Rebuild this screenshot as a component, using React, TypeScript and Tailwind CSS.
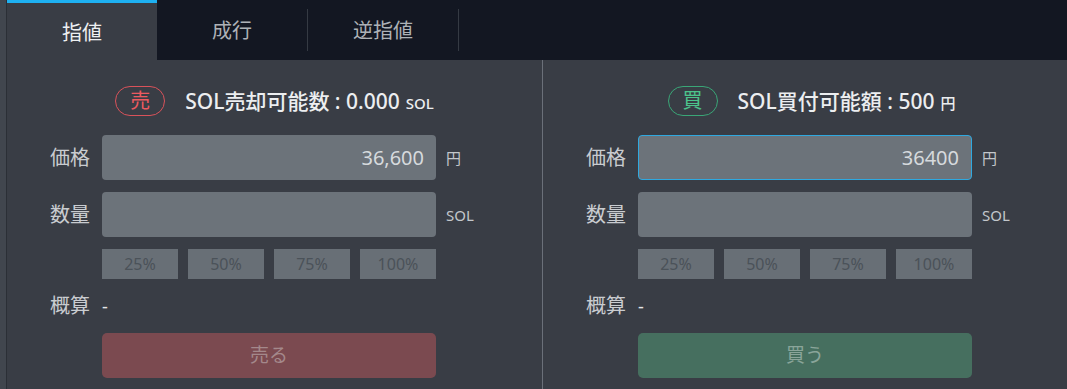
import React from "react";

const font = { fontFamily: '"Noto Sans", "Noto Sans CJK JP", sans-serif' };

type Side = "sell" | "buy";

function Badge({ side }: { side: Side }) {
  const sell = side === "sell";
  return (
    <div
      className={
        "flex h-[30px] w-[50px] items-center justify-center rounded-full border text-[20px] leading-none " +
        (sell ? "border-[#d9525a] text-[#ec5a60]" : "border-[#3aa677] text-[#4cc48c]")
      }
    >
      {sell ? "売" : "買"}
    </div>
  );
}

function Row({ label, children, unit }: { label: string; children: React.ReactNode; unit?: string }) {
  return (
    <div className="flex items-center">
      <div className="w-[52px] text-[20px] leading-none text-[#c9ccd0]">{label}</div>
      {children}
      {unit && <div className="ml-[10px] mt-[2px] text-[15px] leading-none text-[#c3c7cb]">{unit}</div>}
    </div>
  );
}

function OrderColumn({ side }: { side: Side }) {
  const sell = side === "sell";
  return (
    <div className="flex flex-col pl-[43px] pt-[26px]">
      <div className={"flex items-center justify-center gap-[20px] " + (sell ? "pr-[43px]" : "pr-[30px]")}>
        <Badge side={side} />
        <div className="flex items-baseline text-[21px] font-medium leading-none text-[#eceef0]">
          {sell ? "SOL売却可能数 : 0.000" : "SOL買付可能額 : 500"}
          <span className="ml-[6px] text-[15px]">{sell ? "SOL" : "円"}</span>
        </div>
      </div>

      <div className="mt-[19px]">
        <Row label="価格" unit="円">
          <div
            className={
              "flex h-[45px] w-[334px] items-center justify-end rounded-[4px] bg-[#6c737a] pr-[12px] text-[20px] text-[#d6dadd] " +
              (sell ? "" : "border border-[#2fa9e0]")
            }
          >
            {sell ? "36,600" : "36400"}
          </div>
        </Row>
      </div>

      <div className="mt-[12px]">
        <Row label="数量" unit="SOL">
          <div className="h-[45px] w-[334px] rounded-[4px] bg-[#6c737a]" />
        </Row>
      </div>

      <div className="mt-[12px] flex">
        <div className="w-[52px]" />
        <div className="grid w-[334px] grid-cols-4 gap-[10px]">
          {["25%", "50%", "75%", "100%"].map((p) => (
            <div
              key={p}
              className="flex h-[30px] items-center justify-center bg-[#686f76] text-[16px] text-[#4b5259]"
            >
              {p}
            </div>
          ))}
        </div>
      </div>

      <div className="flex h-[54px] items-center">
        <div className="w-[52px] text-[20px] leading-none text-[#c9ccd0]">概算</div>
        <div className="text-[18px] leading-none text-[#e4e6e8]">-</div>
      </div>

      <div className="flex">
        <div className="w-[52px]" />
        <div
          className={
            "flex h-[45px] w-[334px] items-center justify-center rounded-[5px] text-[19px] " +
            (sell ? "bg-[#7b4a50] text-[#a4888b]" : "bg-[#466f5f] text-[#8aa59a]")
          }
        >
          {sell ? "売る" : "買う"}
        </div>
      </div>
    </div>
  );
}

export default function App() {
  const tabs = ["指値", "成行", "逆指値"];
  return (
    <div className="flex h-[389px] w-[1067px] overflow-hidden bg-[#393d45]" style={font}>
      <div className="w-[7px] border-r border-[#2b2f36] bg-[#41464e]" />
      <div className="flex flex-1 flex-col">
        <div className="flex h-[60px] bg-[#131722]">
          {tabs.map((t, i) => (
            <div key={t} className="flex">
              <div
                className={
                  "flex w-[150px] items-center justify-center pt-[2px] text-[20px] " +
                  (i === 0
                    ? "border-t-[3px] border-[#1eb1f2] bg-[#393d45] text-[#eef0f2]"
                    : "text-[#aeb2b7]")
                }
              >
                {t}
              </div>
              {i > 0 && <div className="my-[9px] w-px bg-[#353a43]" />}
            </div>
          ))}
        </div>
        <div className="flex flex-1">
          <div className="w-[535px]">
            <OrderColumn side="sell" />
          </div>
          <div className="w-px bg-[#6b7079]" />
          <div className="flex-1">
            <OrderColumn side="buy" />
          </div>
        </div>
      </div>
    </div>
  );
}
